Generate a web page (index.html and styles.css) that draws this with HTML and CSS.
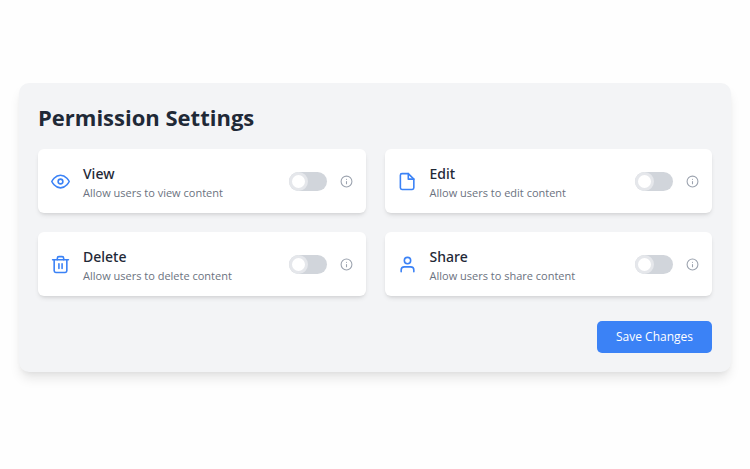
FILE: index.html
```html
<!DOCTYPE html>
<html lang="en">

<head>
    <meta charset="UTF-8" />
    <meta name="viewport" content="width=device-width, initial-scale=1" />
    <title>Permission Settings</title>
    <link rel="stylesheet" href="styles.css">
</head>

<body>
    <form class="panel">
        <h1>Permission Settings</h1>
        <div class="permissions">
            <div class="card">
                <svg class="icon" viewBox="0 0 24 24" aria-hidden="true">
                    <path d="M1 12s4-8 11-8 11 8 11 8-4 8-11 8-11-8-11-8z" />
                    <circle cx="12" cy="12" r="3" />
                </svg>
                <label class="text" for="view">
                    <span class="name">View</span>
                    <span class="description">Allow users to view content</span>
                </label>
                <input class="toggle" type="checkbox" id="view" />
                <button class="info" type="button" aria-label="About View">
                    <svg viewBox="0 0 24 24"><circle cx="12" cy="12" r="10" /><path d="M12 16v-4M12 8h.01" /></svg>
                </button>
            </div>
            <div class="card">
                <svg class="icon" viewBox="0 0 24 24" aria-hidden="true">
                    <path d="M13 2H5a2 2 0 0 0-2 2v16a2 2 0 0 0 2 2h13a2 2 0 0 0 2-2V9z" />
                    <path d="M13 2v7h7" />
                </svg>
                <label class="text" for="edit">
                    <span class="name">Edit</span>
                    <span class="description">Allow users to edit content</span>
                </label>
                <input class="toggle" type="checkbox" id="edit" />
                <button class="info" type="button" aria-label="About Edit">
                    <svg viewBox="0 0 24 24"><circle cx="12" cy="12" r="10" /><path d="M12 16v-4M12 8h.01" /></svg>
                </button>
            </div>
            <div class="card">
                <svg class="icon" viewBox="0 0 24 24" aria-hidden="true">
                    <path d="M2 6h20" />
                    <path d="M20 6v14a2 2 0 0 1-2 2H6a2 2 0 0 1-2-2V6m4 0V4a2 2 0 0 1 2-2h4a2 2 0 0 1 2 2v2" />
                    <path d="M10 11v6M14 11v6" />
                </svg>
                <label class="text" for="delete">
                    <span class="name">Delete</span>
                    <span class="description">Allow users to delete content</span>
                </label>
                <input class="toggle" type="checkbox" id="delete" />
                <button class="info" type="button" aria-label="About Delete">
                    <svg viewBox="0 0 24 24"><circle cx="12" cy="12" r="10" /><path d="M12 16v-4M12 8h.01" /></svg>
                </button>
            </div>
            <div class="card">
                <svg class="icon" viewBox="0 0 24 24" aria-hidden="true">
                    <path d="M20 21v-2a4 4 0 0 0-4-4H8a4 4 0 0 0-4 4v2" />
                    <circle cx="12" cy="7" r="4" />
                </svg>
                <label class="text" for="share">
                    <span class="name">Share</span>
                    <span class="description">Allow users to share content</span>
                </label>
                <input class="toggle" type="checkbox" id="share" />
                <button class="info" type="button" aria-label="About Share">
                    <svg viewBox="0 0 24 24"><circle cx="12" cy="12" r="10" /><path d="M12 16v-4M12 8h.01" /></svg>
                </button>
            </div>
        </div>
        <button class="save" type="submit">Save Changes</button>
    </form>
</body>

</html>
```

FILE: styles.css
```css
:root {
    --panel: #f3f4f6;
    --accent: #3b82f6;
    --heading: #1f2937;
    --muted: #6b7280;
}

*,
*::before {
    box-sizing: border-box;
}

body {
    margin: 0;
    padding: 83px 19px;
    background-color: #fefefe;
    color: var(--heading);
    font-family: 'Segoe UI', 'Open Sans', sans-serif;
}

.panel {
    display: flex;
    flex-direction: column;
    padding: 19px;
    border-radius: 10px;
    background-color: var(--panel);
    box-shadow: 0 8px 12px -2px rgba(0, 0, 0, 0.1), 0 3px 5px -2px rgba(0, 0, 0, 0.05);
}

h1 {
    margin: 0 0 17px;
    font-size: 22px;
    line-height: 30px;
    font-weight: 700;
}

.permissions {
    display: grid;
    grid-template-columns: repeat(auto-fit, minmax(300px, 1fr));
    gap: 19px;
}

.card {
    display: flex;
    align-items: center;
    gap: 13px;
    padding: 13px;
    border-radius: 6px;
    background-color: #fff;
    box-shadow: 0 3px 5px -1px rgba(0, 0, 0, 0.1), 0 2px 3px -1px rgba(0, 0, 0, 0.06);
}

.icon,
.info svg {
    fill: none;
    stroke: currentColor;
    stroke-width: 2;
    stroke-linecap: round;
    stroke-linejoin: round;
}

.icon {
    width: 19px;
    height: 19px;
    color: var(--accent);
}

.text {
    flex: 1;
}

.name,
.description {
    display: block;
}

.name {
    font-family: 'Segoe UI', 'Noto Sans', sans-serif;
    font-size: 14px;
    line-height: 24px;
    font-weight: 500;
}

.description {
    color: var(--muted);
    font-size: 11px;
    line-height: 14px;
}

.toggle {
    appearance: none;
    width: 38px;
    height: 19px;
    margin: 0;
    border-radius: 10px;
    background-color: #d1d5db;
    cursor: pointer;
}

.toggle::before {
    content: "";
    display: block;
    width: 19px;
    height: 19px;
    border: 3px solid #e5e7eb;
    border-radius: 50%;
    background-color: #fff;
}

.toggle:checked {
    background-color: var(--accent);
}

.toggle:checked::before {
    margin-left: auto;
}

.info {
    width: 13px;
    height: 13px;
    padding: 0;
    border: none;
    background: none;
    color: #9ca3af;
    cursor: pointer;
}

.info svg {
    display: block;
}

.save {
    align-self: flex-end;
    margin-top: 25px;
    padding: 6px 19px;
    border: none;
    border-radius: 5px;
    background-color: var(--accent);
    color: #fff;
    font-family: inherit;
    font-size: 12px;
    line-height: 20px;
    cursor: pointer;
}
```
